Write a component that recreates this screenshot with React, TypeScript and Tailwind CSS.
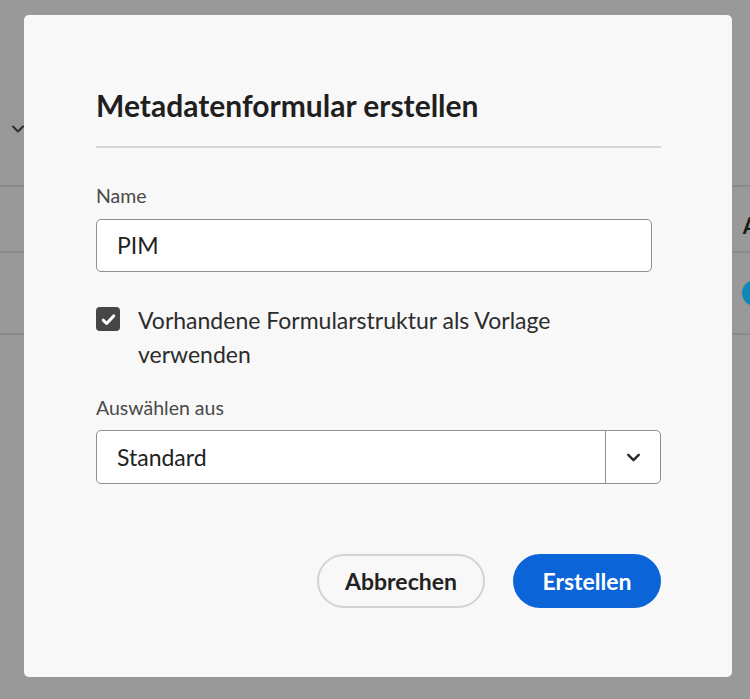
import { ChevronDown } from "lucide-react";

const Backdrop = () => {
  return (
    <div className="absolute inset-0 flex flex-col">
      <div className="h-[185px] flex items-end pb-[46px] pl-[8px] text-[#2c2c2c]">
        <ChevronDown size={20} strokeWidth={2.5} />
      </div>
      <div className="h-[66px] border-t-2 border-[#8b8b8b] flex items-center justify-end">
        <span className="font-bold text-[22px] text-[#1b1b1b] mr-[-8px] mt-[12px]">A</span>
      </div>
      <div className="h-[84px] border-t-2 border-b-2 border-[#8b8b8b] flex items-center justify-end">
        <span className="w-[26px] h-[26px] rounded-full bg-[#1088b4] mr-[-18px]" />
      </div>
    </div>
  );
};

const Checkbox = () => {
  return (
    <span className="mt-[4px] flex h-[24px] w-[24px] shrink-0 items-center justify-center rounded-[4px] bg-[#464646]">
      <svg width="17" height="17" viewBox="0 0 16 16" fill="none">
        <path
          d="M3 8.6l3.2 3.2L13 4.6"
          stroke="white"
          strokeWidth="2.8"
          strokeLinecap="round"
          strokeLinejoin="round"
        />
      </svg>
    </span>
  );
};

export default function App() {
  return (
    <div className="relative h-[699px] w-[750px] overflow-hidden bg-[#999999] font-['Lato',sans-serif]">
      <Backdrop />
      <div className="absolute left-[24px] top-[15px] h-[662px] w-[708px] rounded-[5px] bg-[#f8f8f8] pl-[72px] pr-[71px] pt-[72px]">
        <h1 className="text-[30px] font-bold leading-[36px] text-[#1f1f1f]">
          Metadatenformular erstellen
        </h1>
        <div className="mt-[23px] h-[2px] w-full bg-[#d6d6d6]" />

        <label className="mt-[36px] block text-[19.5px] leading-[24px] text-[#4a4a4a]">
          Name
        </label>
        <div className="mt-[11px] flex h-[53px] w-[556px] items-center rounded-[5px] border border-[#8f8f8f] bg-white px-[20px] text-[23px] text-[#222]">
          PIM
        </div>

        <div className="mt-[31px] flex gap-[18px]">
          <Checkbox />
          <p className="text-[23px] leading-[34px] text-[#2c2c2c]">
            Vorhandene Formularstruktur als Vorlage
            <br />
            verwenden
          </p>
        </div>

        <label className="mt-[25px] block text-[19.5px] leading-[24px] text-[#4a4a4a]">
          Auswählen aus
        </label>
        <div className="mt-[10px] flex h-[54px] w-full rounded-[5px] border border-[#8f8f8f] bg-white">
          <div className="flex flex-1 items-center px-[20px] text-[23px] text-[#222]">
            Standard
          </div>
          <div className="flex w-[55px] items-center justify-center border-l border-[#8f8f8f] text-[#2c2c2c]">
            <ChevronDown size={21} strokeWidth={2.75} />
          </div>
        </div>

        <div className="mt-[70px] flex justify-end gap-[28px]">
          <button className="h-[54px] w-[168px] rounded-full border-2 border-[#d3d3d3] text-[23px] font-bold text-[#222]">
            Abbrechen
          </button>
          <button className="h-[54px] w-[148px] rounded-full bg-[#0b65d8] text-[23px] font-bold text-white">
            Erstellen
          </button>
        </div>
      </div>
    </div>
  );
}
